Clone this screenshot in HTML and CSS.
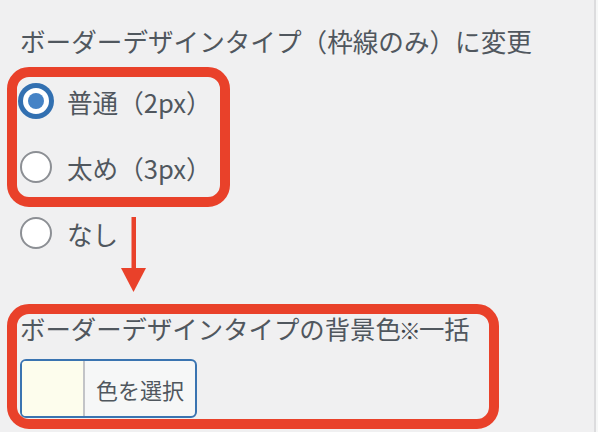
FILE: index.html
```html
<!DOCTYPE html>
<html lang="ja">
<head>
<meta charset="utf-8">
<title>ボーダーデザインタイプ</title>
<link rel="stylesheet" href="styles.css">
</head>
<body>
<div class="screen">
  <div class="panel">
    <p class="field-title">ボーダーデザインタイプ（枠線のみ）に変更</p>
    <div class="options">
      <label class="option"><input type="radio" name="border" class="radio" checked><span>普通（2px）</span></label>
      <label class="option"><input type="radio" name="border" class="radio"><span>太め（3px）</span></label>
      <label class="option"><input type="radio" name="border" class="radio"><span>なし</span></label>
    </div>
    <p class="field-title field-title-bg">ボーダーデザインタイプの背景色<span class="note">※</span>一括</p>
    <button type="button" class="color-result"><span class="swatch"></span><span class="color-text">色を選択</span></button>
  </div>
  <div class="edge"></div>

  <div class="annot annot-a"></div>
  <svg class="annot-arrow" width="30" height="80" viewBox="0 0 30 80">
    <rect x="12.5" y="0" width="4.5" height="53" fill="#e9412a"/>
    <polygon points="2,51 27,51 14.5,75" fill="#e9412a"/>
  </svg>
  <div class="annot annot-b"></div>
</div>
</body>
</html>
```

FILE: styles.css
```css
html, body {
  margin: 0;
  padding: 0;
  background: #f0f0f1;
}

.screen {
  position: relative;
  width: 598px;
  height: 432px;
  overflow: hidden;
  display: flex;
  font-family: "Noto Sans CJK JP", "Noto Sans", sans-serif;
  color: #50575e;
}

.panel {
  flex: 1;
  padding: 23px 0 0 20px;
}

.edge {
  width: 2px;
  border-left: 2px solid #dcdcde;
  background: #f6f7f7;
}

.field-title {
  margin: 0;
  font-size: 25.6px;
  line-height: 36px;
  white-space: nowrap;
}

.field-title-bg {
  margin-top: 44px;
  font-size: 25.4px;
}

.note {
  font-size: 22px;
  font-weight: bold;
  color: #3c434a;
  margin: 0 -2px;
}

.options {
  margin-top: 9px;
  display: flex;
  flex-direction: column;
}

.option {
  display: flex;
  align-items: center;
  gap: 15px;
  height: 66px;
  font-size: 25.6px;
}

.radio {
  appearance: none;
  -webkit-appearance: none;
  margin: 0;
  width: 32px;
  height: 32px;
  box-sizing: border-box;
  border: 2px solid #8c8f94;
  border-radius: 50%;
  background: #fff;
  display: flex;
  align-items: center;
  justify-content: center;
  flex: none;
}

.radio:checked {
  border: 3px solid #3270b1;
  box-shadow: 0 0 0 2px #3270b1;
}

.radio:checked::before {
  content: "";
  width: 16px;
  height: 16px;
  border-radius: 50%;
  background: #4583c6;
}

.color-result {
  margin-top: 12px;
  display: flex;
  align-items: stretch;
  width: 177px;
  height: 59px;
  padding: 0;
  box-sizing: border-box;
  border: 2px solid #3a74b1;
  border-radius: 6px;
  overflow: hidden;
  background: #f6f7f7;
  font-family: inherit;
  color: #50575e;
  cursor: pointer;
}

.swatch {
  width: 61px;
  background: #fdfded;
  border-right: 2px solid #c3c4c7;
}

.color-text {
  flex: 1;
  display: flex;
  align-items: center;
  justify-content: center;
  font-size: 22px;
}

.annot {
  position: absolute;
  box-sizing: border-box;
  border: 10px solid #e9412a;
  border-radius: 22px;
  pointer-events: none;
}

.annot-a {
  left: 7px;
  top: 67px;
  width: 223px;
  height: 140px;
}

.annot-b {
  left: 7px;
  top: 304px;
  width: 492px;
  height: 125px;
}

.annot-arrow {
  position: absolute;
  left: 119px;
  top: 217px;
}
```
